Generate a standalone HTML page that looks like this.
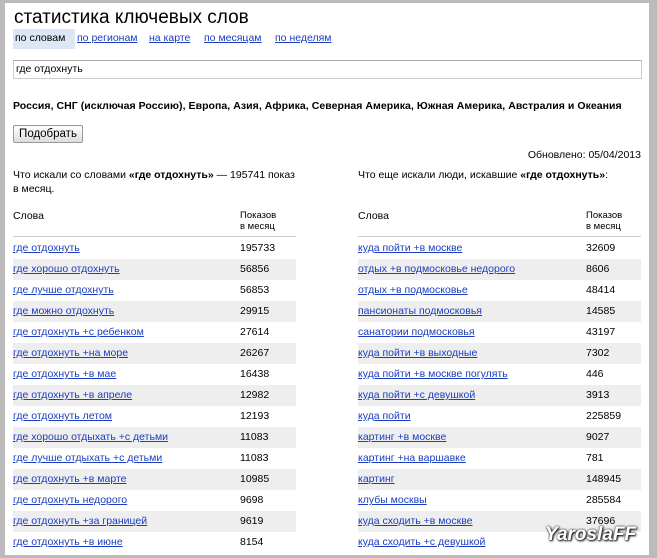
<!DOCTYPE html><html><head><meta charset="utf-8"><style>
body{margin:0;width:657px;height:558px;overflow:hidden;background:#bbb;font-family:"Liberation Sans",Arial,sans-serif;font-size:10.5px;color:#000}
.pg{position:absolute;left:5px;top:3px;width:644px;height:552px;background:#fff;overflow:hidden}
a{color:#1a3dc1;text-decoration:underline}
.ab{position:absolute;white-space:nowrap}
.row{position:absolute;height:21px;line-height:21px}
.g{background:#eee}
</style></head><body><div class="pg">
<div class="ab" style="left:9px;top:3px;font-size:19px;line-height:24px">статистика ключевых слов</div>
<div class="ab" style="left:8px;top:26px;width:62px;height:20px;background:#dde6f5"></div>
<div class="ab" style="left:10px;top:28px;line-height:14px">по словам</div>
<div class="ab" style="left:72px;top:28px;line-height:14px"><a>по регионам</a></div>
<div class="ab" style="left:144px;top:28px;line-height:14px"><a>на карте</a></div>
<div class="ab" style="left:199px;top:28px;line-height:14px"><a>по месяцам</a></div>
<div class="ab" style="left:270px;top:28px;line-height:14px"><a>по неделям</a></div>
<div class="ab" style="left:8px;top:57px;width:627px;height:17px;border:1px solid #ccc;border-top-color:#aaa"></div>
<div class="ab" style="left:11px;top:60px">где отдохнуть</div>
<div class="ab" style="left:8px;top:97px;font-weight:bold;letter-spacing:0.05px">Россия, СНГ (исключая Россию), Европа, Азия, Африка, Северная Америка, Южная Америка, Австралия и Океания</div>
<div class="ab" style="left:8px;top:122px;width:68px;height:16px;border:1px solid #999;border-radius:2px;background:linear-gradient(#fff,#ddd);text-align:center;line-height:16px;font-size:11.5px">Подобрать</div>
<div class="ab" style="right:8px;top:146px">Обновлено: 05/04/2013</div>
<div class="ab" style="left:8px;top:165px;line-height:14px;white-space:normal;width:288px">Что искали со словами <b>«где отдохнуть»</b> — 195741 показ в месяц.</div>
<div class="ab" style="left:353px;top:165px;line-height:14px">Что еще искали люди, искавшие <b>«где отдохнуть»</b>:</div>
<div class="ab" style="left:8px;top:207px">Слова</div>
<div class="ab" style="left:235px;top:207px;line-height:11px;font-size:9.5px">Показов<br>в месяц</div>
<div class="ab" style="left:353px;top:207px">Слова</div>
<div class="ab" style="left:581px;top:207px;line-height:11px;font-size:9.5px">Показов<br>в месяц</div>
<div class="ab" style="left:8px;top:233px;width:283px;border-top:1px solid #ccc"></div>
<div class="ab" style="left:353px;top:233px;width:283px;border-top:1px solid #ccc"></div>
<div id="t"></div>
</div>
<script>
var L=[["где отдохнуть",195733],["где хорошо отдохнуть",56856],["где лучше отдохнуть",56853],["где можно отдохнуть",29915],["где отдохнуть +с ребенком",27614],["где отдохнуть +на море",26267],["где отдохнуть +в мае",16438],["где отдохнуть +в апреле",12982],["где отдохнуть летом",12193],["где хорошо отдыхать +с детьми",11083],["где лучше отдыхать +с детьми",11083],["где отдохнуть +в марте",10985],["где отдохнуть недорого",9698],["где отдохнуть +за границей",9619],["где отдохнуть +в июне",8154]];
var R=[["куда пойти +в москве",32609],["отдых +в подмосковье недорого",8606],["отдых +в подмосковье",48414],["пансионаты подмосковья",14585],["санатории подмосковья",43197],["куда пойти +в выходные",7302],["куда пойти +в москве погулять",446],["куда пойти +с девушкой",3913],["куда пойти",225859],["картинг +в москве",9027],["картинг +на варшавке",781],["картинг",148945],["клубы москвы",285584],["куда сходить +в москве",37696],["куда сходить +с девушкой",""]];
var h="";
for(var i=0;i<15;i++){var y=235+i*21,c=i%2?" g":"";
h+='<div class="row'+c+'" style="left:8px;top:'+y+'px;width:283px"><a style="position:absolute;left:0">'+L[i][0]+'</a><span style="position:absolute;left:227px">'+L[i][1]+'</span></div>';
h+='<div class="row'+c+'" style="left:353px;top:'+y+'px;width:283px"><a style="position:absolute;left:0">'+R[i][0]+'</a><span style="position:absolute;left:228px">'+R[i][1]+'</span></div>';}
document.getElementById("t").innerHTML=h;
</script>
<div class="ab" style="left:545px;top:524px;font-size:19px;font-weight:bold;font-style:italic;color:#fff;text-shadow:0 0 2px #000,1px 1px 2px #000">YaroslaFF</div>
</body></html>
